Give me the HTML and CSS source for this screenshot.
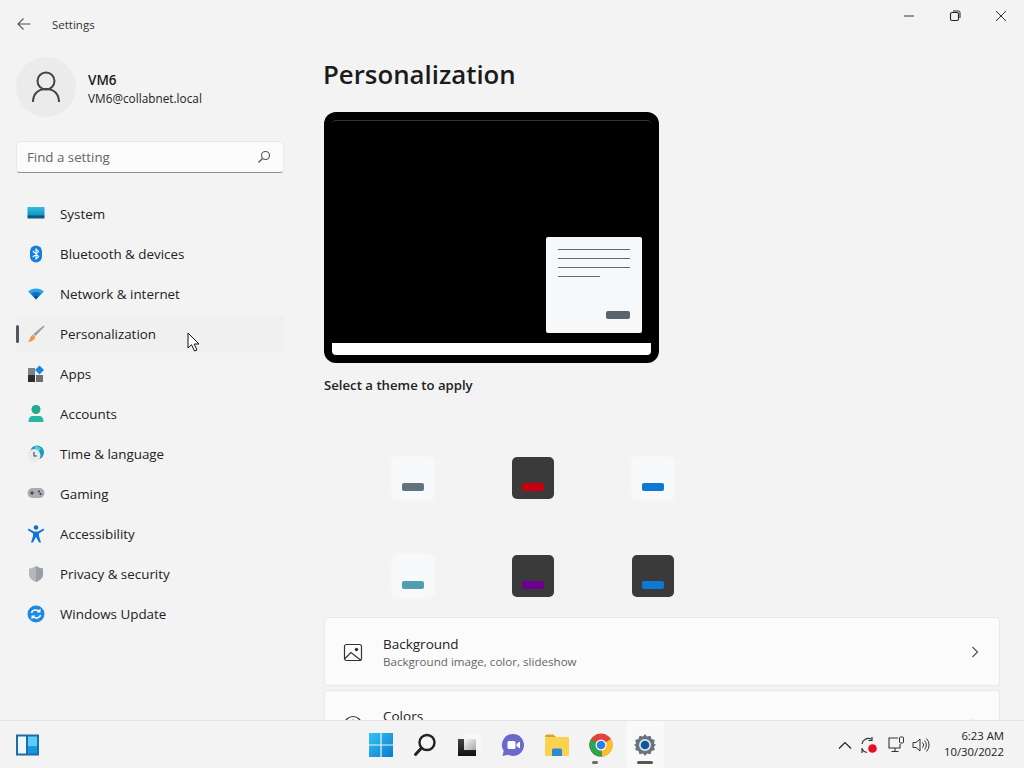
FILE: index.html
```html
<!DOCTYPE html>
<html lang="en">
<head>
<meta charset="utf-8">
<title>Settings</title>
<link rel="stylesheet" href="styles.css">
</head>
<body>
<div class="window">
  <aside class="sidebar">
    <div class="appbar">
      <svg class="back" width="16" height="14" viewBox="0 0 16 14"><path d="M14.5 7H2M7.5 1.5 2 7l5.5 5.5" fill="none" stroke="#555" stroke-width="1.1"/></svg>
      <span class="apptitle">Settings</span>
    </div>
    <div class="profile">
      <div class="avatar">
        <svg width="30" height="32" viewBox="0 0 30 32"><circle cx="15" cy="10" r="8.5" fill="none" stroke="#444" stroke-width="2"/><path d="M2 31c0-8 5-13 13-13s13 5 13 13" fill="none" stroke="#444" stroke-width="2"/></svg>
      </div>
      <div class="who">
        <div class="name">VM6</div>
        <div class="mail">VM6@collabnet.local</div>
      </div>
    </div>
    <div class="search">
      <span class="placeholder">Find a setting</span>
      <svg width="14" height="14" viewBox="0 0 14 14"><circle cx="8.5" cy="5.5" r="4" fill="none" stroke="#555" stroke-width="1.1"/><path d="M5.5 8.5 1.5 12.5" stroke="#555" stroke-width="1.2"/></svg>
    </div>
    <nav class="nav">
      <div class="item">
        <svg class="ico" viewBox="0 0 18 18"><defs><linearGradient id="sys" x1="0" y1="0" x2="0" y2="1"><stop offset="0" stop-color="#2fc0de"/><stop offset="1" stop-color="#1090c4"/></linearGradient></defs><rect x="0.5" y="2" width="17" height="9" fill="url(#sys)"/><rect x="0.5" y="10.5" width="17" height="3" fill="#0c5a86"/></svg>
        <span>System</span>
      </div>
      <div class="item">
        <svg class="ico" viewBox="0 0 18 18"><rect x="3" y="0.5" width="12" height="17" rx="6" fill="#0f7fe0"/><path d="M5.8 6 11.6 11.4 9 14V4l2.6 2.6L5.8 12" fill="none" stroke="#fff" stroke-width="1.1"/></svg>
        <span>Bluetooth &amp; devices</span>
      </div>
      <div class="item">
        <svg class="ico" viewBox="0 0 18 18"><path d="M1 6.5C5.5 2.5 12.5 2.5 17 6.5L9 14.5Z" fill="#2ba4ea"/><path d="M4 8.5c3-2 7-2 10 0L9 14.5Z" fill="#0f6fc6"/><path d="M6.5 11c1.500-.8 3.500-.8 5 0L9 14.500Z" fill="#0a4f9a"/></svg>
        <span>Network &amp; internet</span>
      </div>
      <div class="item active">
        <span class="marker"></span>
        <svg class="ico" viewBox="0 0 18 18"><path d="M16.500 0.500 17.500 1.500 8.500 11 6.500 9Z" fill="#9a9a9a"/><path d="M6 9.500 8.500 12C7.500 15.500 4 17 1 17 3 15 3 11 6 9.500Z" fill="#ef9a42"/></svg>
        <span>Personalization</span>
      </div>
      <div class="item">
        <svg class="ico" viewBox="0 0 18 18"><rect x="1" y="3" width="7" height="7" fill="#7b8289"/><rect x="1" y="10" width="7" height="7" fill="#2e2e2e"/><rect x="9" y="10" width="7" height="7" fill="#6e6e6e"/><path d="M12.500 0.500 17 5 12.500 9.500 8 5Z" fill="#1a86e0"/></svg>
        <span>Apps</span>
      </div>
      <div class="item">
        <svg class="ico" viewBox="0 0 18 18"><circle cx="9" cy="4.500" r="4.500" fill="#1fa98e"/><path d="M1.500 17c0-4 2-6 4-6h7c2 0 4 2 4 6Z" fill="#26b8a4"/></svg>
        <span>Accounts</span>
      </div>
      <div class="item">
        <svg class="ico" viewBox="0 0 18 18"><circle cx="10" cy="7.500" r="7" fill="#1a9cc4"/><path d="M8 1c3 0 5 1 6 3l-3 3-3-2Z" fill="#55cfd6"/><circle cx="7" cy="10.500" r="6.500" fill="#e9ebee"/><path d="M7 7v4h3" fill="none" stroke="#444" stroke-width="1.100"/></svg>
        <span>Time &amp; language</span>
      </div>
      <div class="item">
        <svg class="ico" viewBox="0 0 18 18"><rect x="0.500" y="3" width="17" height="10" rx="5" fill="#a9adb3"/><path d="M3 8h4M5 6v4" stroke="#333" stroke-width="1"/><circle cx="12" cy="6.500" r="1" fill="#333"/><circle cx="13.500" cy="9" r="1" fill="#333"/></svg>
        <span>Gaming</span>
      </div>
      <div class="item">
        <svg class="ico" viewBox="0 0 18 18"><circle cx="9" cy="2.500" r="2.300" fill="#0f6fc6"/><path d="M1.500 3.500 7 6.500h4l5.500-3 .8 1.500L12 8.500V11l2 6.500h-2L9 12l-3 5.500H4L6 11V8.500L.7 5Z" fill="#0f78d4"/></svg>
        <span>Accessibility</span>
      </div>
      <div class="item">
        <svg class="ico" viewBox="0 0 18 18"><path d="M9 1c2 1.600 4.500 2.400 7 2.500V9c0 4-3 6.500-7 8-4-1.500-7-4-7-8V3.500C4.500 3.400 7 2.600 9 1Z" fill="#b4b8bd"/><path d="M9 1c2 1.600 4.500 2.400 7 2.500V9c0 4-3 6.500-7 8Z" fill="#9a9fa5"/></svg>
        <span>Privacy &amp; security</span>
      </div>
      <div class="item">
        <svg class="ico" viewBox="0 0 18 18"><circle cx="9" cy="9" r="8.500" fill="#1b8ae0"/><path d="M4.500 8C5 5.500 8.500 4 11.500 5.800M13.500 10C13 12.500 9.500 14 6.500 12.200" fill="none" stroke="#fff" stroke-width="1.500"/><path d="M13.500 3.500v4h-4ZM4.500 14.500v-4h4Z" fill="#fff"/></svg>
        <span>Windows Update</span>
      </div>
    </nav>
  </aside>
  <main class="content">
    <div class="controls">
      <svg width="12" height="12" viewBox="0 0 12 12"><path d="M1 6h10" stroke="#333" stroke-width="1"/></svg>
      <svg width="12" height="12" viewBox="0 0 12 12"><rect x="1.500" y="2.500" width="8" height="8" rx="1.500" fill="none" stroke="#222" stroke-width="1.100"/><path d="M4 1h5.500A1.500 1.500 0 0 1 11 2.500V8" fill="none" stroke="#222" stroke-width="1"/></svg>
      <svg width="12" height="12" viewBox="0 0 12 12"><path d="M1 1l10 10M11 1 1 11" stroke="#333" stroke-width="1"/></svg>
    </div>
    <h1 class="title">Personalization</h1>
    <div class="preview">
      <div class="screen">
        <div class="dialog">
          <span class="line"></span><span class="line"></span><span class="line"></span><span class="line short"></span>
          <span class="dbtn"></span>
        </div>
      </div>
      <div class="strip"></div>
    </div>
    <h2 class="subhead">Select a theme to apply</h2>
    <div class="themes">
      <div class="tile light"><span class="pill p-grey"></span></div>
      <div class="tile dark"><span class="pill p-red"></span></div>
      <div class="tile light"><span class="pill p-blue"></span></div>
      <div class="tile light"><span class="pill p-teal"></span></div>
      <div class="tile dark"><span class="pill p-purple"></span></div>
      <div class="tile dark"><span class="pill p-blue"></span></div>
    </div>
    <div class="card">
      <svg class="cicon" width="20" height="20" viewBox="0 0 20 20"><rect x="1.500" y="2.500" width="17" height="16" rx="2" fill="none" stroke="#333" stroke-width="1.200"/><circle cx="13.500" cy="7.500" r="1.700" fill="#333"/><path d="M2 16.500 8 10.500 17.500 18" fill="none" stroke="#333" stroke-width="1.200"/></svg>
      <div class="ctext">
        <div class="ctitle">Background</div>
        <div class="csub">Background image, color, slideshow</div>
      </div>
      <svg class="chev" width="8" height="12" viewBox="0 0 8 12"><path d="M1.500 1 6.500 6 1.500 11" fill="none" stroke="#555" stroke-width="1.200"/></svg>
    </div>
    <div class="card">
      <svg class="cicon" width="20" height="20" viewBox="0 0 20 20"><circle cx="10" cy="10" r="8.500" fill="none" stroke="#333" stroke-width="1.200"/><circle cx="10" cy="5.500" r="1.100" fill="#333"/></svg>
      <div class="ctext">
        <div class="ctitle">Colors</div>
      </div>
      <svg class="chev" width="8" height="12" viewBox="0 0 8 12"><path d="M1.500 1 6.500 6 1.500 11" fill="none" stroke="#555" stroke-width="1.200"/></svg>
    </div>
  </main>
</div>
<footer class="taskbar">
  <div class="widgets">
    <svg width="26" height="24" viewBox="0 0 26 24"><rect x="1" y="1.500" width="23" height="21" fill="#1c6ea4"/><rect x="3" y="3.500" width="8" height="17" fill="#eef7ff"/><rect x="13" y="3.500" width="9" height="10" fill="#5ccdfb"/><rect x="13" y="13.500" width="9" height="7" fill="#1398e4"/></svg>
  </div>
  <div class="apps">
    <div class="tb"><svg width="24" height="24" viewBox="0 0 24 24"><defs><linearGradient id="win" x1="0" y1="0" x2="1" y2="1"><stop offset="0" stop-color="#33c3f2"/><stop offset="1" stop-color="#0b7cd0"/></linearGradient></defs><path d="M0 0h11.400v11.400H0ZM12.600 0H24v11.400H12.600ZM0 12.600h11.400V24H0ZM12.600 12.600H24V24H12.600Z" fill="url(#win)"/></svg></div>
    <div class="tb"><svg width="24" height="24" viewBox="0 0 24 24"><circle cx="14" cy="9.500" r="7.500" fill="none" stroke="#222" stroke-width="2.400"/><path d="M8.500 15 2.500 21.500" stroke="#222" stroke-width="3" stroke-linecap="round"/></svg></div>
    <div class="tb"><svg width="24" height="24" viewBox="0 0 24 24"><defs><linearGradient id="tv" x1="0" y1="0" x2="1" y2="1"><stop offset="0" stop-color="#f8f8f8"/><stop offset="1" stop-color="#a8a8a8"/></linearGradient><linearGradient id="tv2" x1="0" y1="0" x2="0" y2="1"><stop offset="0" stop-color="#444"/><stop offset="1" stop-color="#111"/></linearGradient></defs><rect x="6" y="1" width="18" height="16" fill="#f8f8f8"/><rect x="1" y="6" width="18" height="17" fill="url(#tv2)"/><rect x="7" y="6" width="12" height="11" fill="url(#tv)"/></svg></div>
    <div class="tb"><svg width="24" height="24" viewBox="0 0 24 24"><path d="M12 1a11 11 0 1 1-5 20.800L1.500 23l1.200-5A11 11 0 0 1 12 1Z" fill="#6b69c9"/><rect x="6.500" y="8" width="8" height="8" rx="1.500" fill="#fff"/><path d="M15.500 11l3.500-2.500v7L15.500 13Z" fill="#fff"/></svg></div>
    <div class="tb"><svg width="26" height="24" viewBox="0 0 26 24"><path d="M1 3a1.500 1.500 0 0 1 1.500-1.500h7L12 4h-11Z" fill="#d9a52e"/><rect x="1" y="4" width="24" height="19" rx="1.500" fill="#fbd24f"/><path d="M8 23v-6a1.500 1.500 0 0 1 1.500-1.500h7A1.500 1.500 0 0 1 18 17v6Z" fill="#2a8ad4"/></svg></div>
    <div class="tb"><svg width="24" height="24" viewBox="0 0 24 24"><circle cx="12" cy="12" r="11.500" fill="#e0433a"/><path d="M12 12 22 6A11.500 11.500 0 0 1 13 23.500Z" fill="#fbc02d"/><path d="M12 12 13 23.500A11.500 11.500 0 0 1 2 6Z" fill="#2ea24e"/><circle cx="12" cy="12" r="5.500" fill="#fff"/><circle cx="12" cy="12" r="4.300" fill="#2f7fe8"/></svg><span class="run dot"></span></div>
    <div class="tb on"><svg width="24" height="24" viewBox="0 0 24 24"><path d="M12 1l2 2.500 3.500-.8 1 3.300 3.300 1-.8 3.500L23 12l-2 1.500.8 3.500-3.300 1-1 3.300-3.500-.8-2 2.500-2-2.500-3.500.8-1-3.300-3.300-1 .8-3.500L1 12l2-1.500-.8-3.500 3.300-1 1-3.300 3.500.8Z" fill="#69737d"/><circle cx="12" cy="12" r="6" fill="#dfe6ec"/><circle cx="12" cy="12" r="4.300" fill="#12579e"/></svg><span class="run bar"></span></div>
  </div>
  <div class="tray">
    <svg class="t-chev" width="14" height="8" viewBox="0 0 14 8"><path d="M1 7.500 7 1.500l6 6" fill="none" stroke="#222" stroke-width="1.200"/></svg>
    <svg class="t-sync" width="18" height="18" viewBox="0 0 18 18"><path d="M2 8C2.500 4 7 1 11.500 3M2 12v5M2 13c1 2 2.500 3 5 3.500" fill="none" stroke="#333" stroke-width="1.200"/><path d="M12 1v3.500H8.500" fill="none" stroke="#333" stroke-width="1.200"/><circle cx="12.500" cy="12.500" r="4.300" fill="#e8101e"/></svg>
    <svg class="t-net" width="17" height="17" viewBox="0 0 17 17"><path d="M10 2H1v10h11V8M7 12v3M3.500 15.500h7" fill="none" stroke="#333" stroke-width="1.100"/><rect x="11.500" y="1" width="4" height="6" rx="1" fill="none" stroke="#333" stroke-width="1"/></svg>
    <svg width="18" height="16" viewBox="0 0 18 16"><path d="M1 5.500h3l4-3.500v12l-4-3.500H1Z" fill="none" stroke="#333" stroke-width="1"/><path d="M10.500 5.500a3.500 3.500 0 0 1 0 5M12.500 3.500a6.500 6.500 0 0 1 0 9M14.500 1.500a9.500 9.500 0 0 1 0 13" fill="none" stroke="#333" stroke-width="1"/></svg>
    <div class="clock"><div>6:23 AM</div><div>10/30/2022</div></div>
  </div>
</footer>
<svg class="cursor" width="14" height="20" viewBox="0 0 14 20"><path d="M1 1v15l3.500-3.300L7.500 19l2.500-1-2.800-6H12Z" fill="#fff" stroke="#111" stroke-width="1"/></svg>
</body>
</html>
```
FILE: styles.css
```css
* { box-sizing: border-box; }
html, body { margin: 0; height: 100%; }
body {
  width: 1024px;
  height: 768px;
  overflow: hidden;
  display: flex;
  flex-direction: column;
  background: #f3f3f3;
  color: #1b1b1b;
  font-family: "Open Sans", "Noto Sans", "Liberation Sans", sans-serif;
  font-size: 13.4px;
  position: relative;
}
.window { flex: 1; display: flex; min-height: 0; overflow: hidden; }
.sidebar { width: 300px; flex: none; padding: 0 16px; }
.appbar { height: 48px; display: flex; align-items: center; margin-right: -16px; }
.back { margin-right: 20px; }
.apptitle { font-size: 11.5px; color: #333; }
.profile { display: flex; align-items: center; gap: 12px; height: 60px; margin-top: 9px; }
.avatar { width: 60px; height: 60px; border-radius: 50%; background: #ebebeb; display: flex; align-items: center; justify-content: center; }
.who { padding-top: 4px; }
.name { font-size: 13.5px; font-weight: 600; line-height: 18px; }
.mail { font-size: 11.8px; line-height: 18px; color: #222; }
.search {
  margin-top: 24px; height: 32px; width: 268px;
  display: flex; align-items: center; justify-content: space-between;
  padding: 0 12px 0 10px;
  background: #fbfbfb; border: 1px solid #e8e8e8; border-bottom: 1px solid #8f8f8f; border-radius: 4px;
}
.placeholder { font-size: 13.3px; color: #666; }
.nav { margin-top: 23px; display: flex; flex-direction: column; gap: 4px; width: 268px; }
.item { height: 36px; display: flex; align-items: center; padding-left: 11px; gap: 15px; border-radius: 4px; position: relative; color: #222; }
.item.active { background: #f0f0f0; }
.marker { position: absolute; left: 0; top: 9px; width: 3px; height: 18px; border-radius: 2px; background: #50585f; }
.ico { width: 18px; height: 18px; flex: none; }
.content { flex: 1; padding-left: 24px; overflow: hidden; position: relative; }
.controls { position: absolute; top: 10px; right: 17px; display: flex; gap: 34px; }
.title { margin: 0 0 0 -1px; height: 112px; padding-top: 52px; font-size: 25.8px; line-height: 44px; font-weight: 600; color: #1b1b1b; }
.preview { width: 335px; height: 251px; background: #000; border-radius: 12px; padding: 8px; display: flex; flex-direction: column; }
.screen { flex: 1; border-top: 1px solid #333; display: flex; justify-content: flex-end; align-items: flex-end; padding: 0 9px 10px 0; border-radius: 4px 4px 0 0; }
.dialog { width: 96px; height: 96px; background: #f7f8f9; border-radius: 2px; padding: 12px; display: flex; flex-direction: column; gap: 8px; }
.line { display: block; height: 1px; background: #666; }
.line.short { width: 42px; }
.dbtn { display: block; width: 24px; height: 8px; background: #5a646e; border-radius: 2px; margin: 26px 0 0 auto; }
.strip { height: 12px; background: #fff; border-radius: 0 0 4px 4px; flex: none; }
.subhead { margin: 12px 0 0; font-size: 13.2px; line-height: 20px; font-weight: 600; color: #222; }
.themes { margin-top: 62px; padding-left: 68px; display: grid; grid-template-columns: repeat(3, 120px); grid-auto-rows: 42px; row-gap: 56px; }
.tile { width: 42px; height: 42px; border-radius: 5px; display: flex; align-items: flex-end; justify-content: center; padding-bottom: 8px; }
.tile.light { background: #f8f9fa; box-shadow: 0 0 4px 1px #f7f8f9; }
.tile.dark { background: #3a3a3a; }
.pill { width: 22px; height: 8px; border-radius: 2px; display: block; }
.p-grey { background: #63737d; }
.p-red { background: #c8000f; }
.p-blue { background: #0f78d4; }
.p-teal { background: #4f9fb0; }
.p-purple { background: #6b0090; }
.card {
  width: 676px; height: 69px; margin-top: 4px;
  display: flex; align-items: center;
  padding: 0 20px 0 18px;
  background: #fbfbfb; border: 1px solid #e8e8e8; border-radius: 4px;
}
.themes + .card { margin-top: 20px; }
.themes + .card .ctext { padding-top: 2px; }
.cicon { margin-right: 20px; flex: none; }
.ctext { flex: 1; min-height: 35px; }
.ctitle { font-size: 13.5px; line-height: 19px; color: #222; }
.csub { font-size: 11.6px; line-height: 16px; color: #666; }
.taskbar {
  height: 48px; flex: none; display: flex; align-items: center;
  background: #f3f3f3; border-top: 1px solid #e3e3e3;
}
.widgets { width: 359px; padding-left: 15px; display: flex; align-items: center; }
.apps { display: flex; align-items: center; }
.tb { width: 44px; height: 47px; display: flex; align-items: center; justify-content: center; position: relative; }
.tb.on { width: 38px; margin: 0 3px; background: #f9f9f9; border-radius: 4px; }
.run { position: absolute; bottom: 4px; background: #6a6a6a; border-radius: 2px; height: 3px; }
.dot { width: 6px; left: 13px; }
.bar { width: 16px; left: 11px; background: #555; }
.tray { margin-left: auto; display: flex; align-items: center; padding-right: 20px; }
.t-chev { margin-right: 8px; }
.t-sync { margin-right: 10px; }
.t-net { margin-right: 7px; }
.clock { width: 62px; margin: -2px 0 0 12px; text-align: right; font-size: 11.3px; line-height: 16px; color: #222; }
.cursor { position: absolute; left: 187px; top: 332px; }
```
